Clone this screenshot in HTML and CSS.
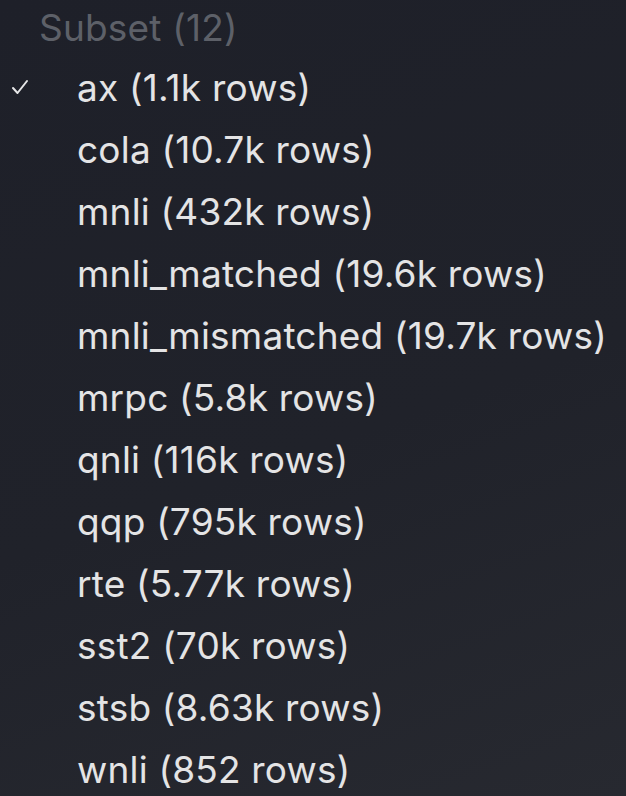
FILE: index.html
```html
<!DOCTYPE html>
<html>
<head>
<meta charset="utf-8">
<link rel="stylesheet" href="styles.css">
</head>
<body>
<div class="menu">
  <div class="menu-header">Subset (12)</div>
  <ul class="menu-list">
    <li class="menu-item checked"><span class="check"><svg width="18" height="16" viewBox="0 0 18 16"><path d="M2 9 L6.5 14 L16 2" fill="none" stroke="#e6e6e7" stroke-width="2" stroke-linecap="round" stroke-linejoin="round"/></svg></span><span class="label">ax (1.1k rows)</span></li>
    <li class="menu-item"><span class="check"></span><span class="label">cola (10.7k rows)</span></li>
    <li class="menu-item"><span class="check"></span><span class="label">mnli (432k rows)</span></li>
    <li class="menu-item"><span class="check"></span><span class="label">mnli_matched (19.6k rows)</span></li>
    <li class="menu-item"><span class="check"></span><span class="label">mnli_mismatched (19.7k rows)</span></li>
    <li class="menu-item"><span class="check"></span><span class="label">mrpc (5.8k rows)</span></li>
    <li class="menu-item"><span class="check"></span><span class="label">qnli (116k rows)</span></li>
    <li class="menu-item"><span class="check"></span><span class="label">qqp (795k rows)</span></li>
    <li class="menu-item"><span class="check"></span><span class="label">rte (5.77k rows)</span></li>
    <li class="menu-item"><span class="check"></span><span class="label">sst2 (70k rows)</span></li>
    <li class="menu-item"><span class="check"></span><span class="label">stsb (8.63k rows)</span></li>
    <li class="menu-item"><span class="check"></span><span class="label">wnli (852 rows)</span></li>
  </ul>
</div>
</body>
</html>
```
FILE: styles.css
```css
html, body {
  margin: 0;
  padding: 0;
  height: 100%;
}
body {
  background: linear-gradient(160deg, #1e2029 0%, #20222a 55%, #272930 100%);
  font-family: Inter, "Noto Sans", sans-serif;
  overflow: hidden;
}
.menu {
  width: 626px;
  height: 796px;
}
.menu-header {
  padding-left: 39px;
  line-height: 55px;
  height: 56px;
  font-size: 37px;
  color: #5d6068;
  letter-spacing: 0.2px;
}
.menu-list {
  list-style: none;
  margin: 0;
  padding: 0;
}
.menu-item {
  display: flex;
  align-items: center;
  height: 62px;
  font-size: 37px;
  color: #e4e4e5;
  letter-spacing: 0.2px;
}
.check {
  width: 77px;
  padding-left: 11px;
  box-sizing: border-box;
  display: flex;
  align-items: center;
}
.label {
  white-space: nowrap;
}
```
